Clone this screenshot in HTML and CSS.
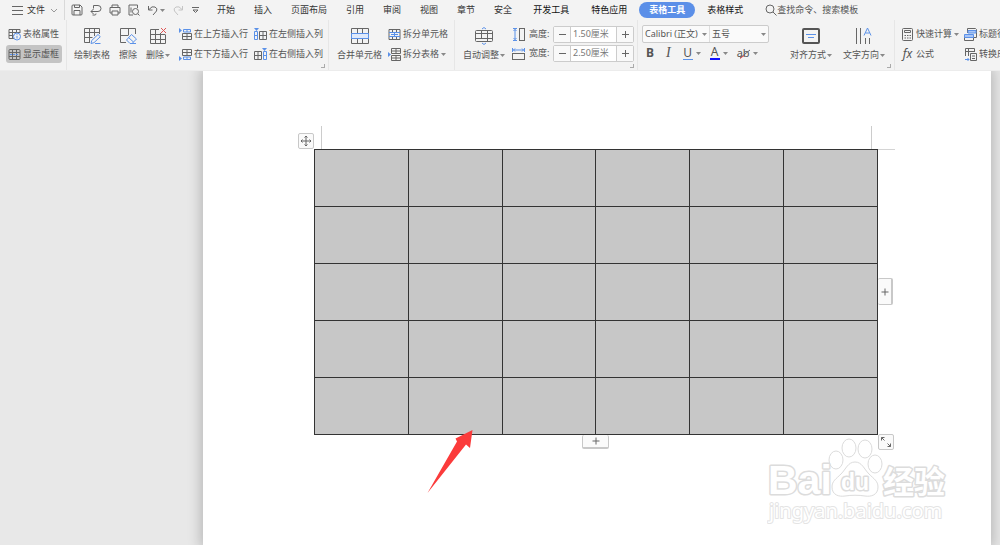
FILE: index.html
```
<!DOCTYPE html>
<html lang="zh-CN">
<head>
<meta charset="utf-8">
<title>文字处理 - 表格工具</title>
<link rel="stylesheet" href="styles.css">
</head>
<body>
<svg class="defs" aria-hidden="true">
  <symbol id="caret" viewBox="0 0 5 3"><path class="solid" d="M0 0h5L2.500 3z"/></symbol>
</svg>
<header class="toolbar">
  <div class="menubar">
    <button class="file"><svg class="burger" viewBox="0 0 11 9"><path d="M0 .5h11M0 4.500h11M0 8.500h11"/></svg>文件<svg class="chevron" viewBox="0 0 8 5"><path d="M1 1l3 3 3-3"/></svg></button>
    <div class="quick">
      <button aria-label="保存"><svg viewBox="0 0 12 12"><path d="M1 2q0-1 1-1h7l2 2v7q0 1-1 1H2q-1 0-1-1zM3.500 1v2.500h5V1M3 11V6.500h6V11"/></svg></button>
      <button aria-label="输出"><svg viewBox="0 0 12 12"><path d="M3.500 4.500V1.500H8a3 3 0 010 6H1M3.500 5L1 7.500 3.500 10M2.500 11H5q1 0 1-1.500"/></svg></button>
      <button aria-label="打印"><svg viewBox="0 0 12 12"><path d="M3 3.500V1h6v2.500M3 9H1V3.500h10V9H9M3 7h6v4H3z"/></svg></button>
      <button aria-label="打印预览"><svg viewBox="0 0 12 12"><path d="M5 11H1V1h8.500v3M10 10l1.500 1.500M3 3.500v5"/><circle cx="7.500" cy="7.500" r="3"/></svg></button>
      <button class="undo" aria-label="撤销"><svg viewBox="0 0 12 12"><path d="M1.500 2v4h4M2 5.500q3-4 6-2.500t1.500 4L6 11"/></svg><svg class="caret"><use href="#caret"/></svg></button>
      <button class="faded" aria-label="恢复"><svg viewBox="0 0 12 12"><path d="M10.500 2v4h-4M10 5.500Q7 1.500 4 3T2.500 7L6 11"/></svg></button>
      <button class="more" aria-label="自定义"><svg viewBox="0 0 7 6"><path d="M0 .5h7M1 3h5L3.500 5.500z"/></svg></button>
    </div>
    <nav class="tabs">
      <button>开始</button><button>插入</button><button>页面布局</button><button>引用</button><button>审阅</button><button>视图</button><button>章节</button><button>安全</button>
    </nav>
    <nav class="tabs wide">
      <button>开发工具</button><button>特色应用</button><button class="active">表格工具</button><button>表格样式</button>
    </nav>
    <button class="search"><svg viewBox="0 0 12 12"><circle cx="5" cy="5" r="4"/><path d="M8 8l3.500 3.500"/></svg>查找命令、搜索模板</button>
  </div>

  <div class="ribbon">
    <section class="group props">
      <div class="stack">
        <button class="cmd"><svg viewBox="0 0 13 13"><path d="M6 10.500H1v-9h11V5M1 4.500h11M1 7.500h5M4.500 1.500v9M8.500 1.500v3"/><g class="blue"><circle class="paper" cx="9" cy="8.500" r="3.500"/><path d="M9 8v2.500M9 6.200v1"/></g></svg>表格属性</button>
        <button class="cmd pressed"><svg viewBox="0 0 13 13"><rect x="1" y="1.500" width="11" height="10" rx="1"/><path d="M1 4.500h11M4.500 1.500v10M8.500 1.500v10M1 8.500h11"/><path class="blue" d="M2 6.500h9" stroke-dasharray="2 1"/></svg>显示虚框</button>
      </div>
    </section>

    <section class="group edit">
      <button class="big"><svg viewBox="0 0 18 18"><path d="M7 15.500H1.500v-14h15V7M1.500 5.500h15M1.500 10.500h8M6.500 1.500v14M11.500 1.500V9"/><path class="blue paper" d="M8 16.500l.7-3L15 7.500l2.300 2.200-6.300 6zM12 16.500h5.500"/></svg><span>绘制表格</span></button>
      <button class="big"><svg viewBox="0 0 18 18"><path d="M7 15.500H1.500v-14h15V7M1.500 8.500h8M9.500 1.500V8"/><path class="blue paper" d="M12.500 7.500l5 4.500-4.500 4.500h-2L7.500 13zM9.500 10.500l5 4.500M11 16.500h6"/></svg><span>擦除</span></button>
      <button class="big"><svg viewBox="0 0 18 18"><path d="M10 2.500H1.500v14h15V8M1.500 7.500h15M1.500 12.500h15M6.500 2.500v14M11.500 6v10.500"/><path class="red" d="M12 1l5 5M17 1l-5 5"/></svg><span>删除<svg class="caret"><use href="#caret"/></svg></span></button>
      <div class="stack">
        <button class="cmd"><svg viewBox="0 0 13 13"><path d="M3.500 5.500h9v6h-9zM3.500 8.500h9M8 5.500v6"/><path class="blue" d="M4.500 4V1.500h7V4zM8 1.500V4"/><path class="bluefill" d="M0 0l3 2.500L0 5z"/></svg>在上方插入行</button>
        <button class="cmd"><svg viewBox="0 0 13 13"><path d="M3.500 1.500h9v6h-9zM3.500 4.500h9M8 1.500v6"/><path class="blue" d="M4.500 9v2.500h7V9zM8 9v2.500"/><path class="bluefill" d="M0 8l3 2.500L0 13z"/></svg>在下方插入行</button>
      </div>
      <div class="stack">
        <button class="cmd"><svg viewBox="0 0 13 13"><path d="M5.500 3.500h7v8h-7zM5.500 7.500h7M9 3.500v8"/><path class="blue" d="M.5 3.500h3v8h-3zM.5 7.500h3"/><path class="bluefill" d="M0 0h5L2.500 3z"/></svg>在左侧插入列</button>
        <button class="cmd"><svg viewBox="0 0 13 13"><path d="M.5 3.500h7v8h-7zM.5 7.500h7M4 3.500v8"/><path class="blue" d="M9.500 3.500h3v8h-3zM9.500 7.500h3"/><path class="bluefill" d="M8 0h5l-2.500 3z"/></svg>在右侧插入列</button>
      </div>
      <i class="corner"></i>
    </section>

    <section class="group merge">
      <button class="big"><svg viewBox="0 0 18 18"><path d="M.5 1.500h17v15H.5zM6.500 1.500V6M11.500 1.500V6M6.500 12v4.500M11.500 12v4.500"/><path class="blue tint" d="M.5 6.500h17v5H.5z"/></svg><span>合并单元格</span></button>
      <div class="stack">
        <button class="cmd"><svg viewBox="0 0 13 13"><path d="M1 1.500h11v10H1zM4.500 1.500V4M8.500 1.500V4M4.500 9v2.500M8.500 9v2.500"/><path class="blue" d="M1 4.500h11M1 8.500h11M3 6.500h7M6.500 4.500v4"/></svg>拆分单元格</button>
        <button class="cmd"><svg viewBox="0 0 13 13"><path d="M3.500 5.500v-5h9v5zM3.500 3h9M8 .5v5M3.500 7.500h9v5h-9zM3.500 10h9M8 7.500v5"/><path class="bluefill" d="M0 4l3 2.500L0 9z"/></svg>拆分表格<svg class="caret"><use href="#caret"/></svg></button>
      </div>
    </section>

    <section class="group size">
      <button class="big"><svg viewBox="0 0 18 18"><rect x=".5" y="3.500" width="17" height="11" rx="1"/><path d="M.5 6.500h17M.5 11.500h17M6.500 3.500v8M12.500 3.500v11"/><path class="blue" d="M7 2L9 .5 11 2M7 16l2 1.500 2-1.500"/></svg><span>自动调整<svg class="caret"><use href="#caret"/></svg></span></button>
      <div class="stack measures">
        <div class="measure"><svg viewBox="0 0 13 13"><rect x="7.500" y=".5" width="5" height="12"/><path class="blue" d="M1 .5h4M1 12.500h4M3 1v11M1.500 3L3 1.500 4.500 3M1.500 10L3 11.500 4.500 10"/></svg><label for="h">高度:</label><div class="stepper"><button aria-label="减小高度"><svg viewBox="0 0 7 7"><path d="M0 3.500h7"/></svg></button><input id="h" value="1.50厘米"><button aria-label="增大高度"><svg viewBox="0 0 7 7"><path d="M0 3.500h7M3.500 0v7"/></svg></button></div></div>
        <div class="measure"><svg viewBox="0 0 13 13"><rect x=".5" y="6.500" width="12" height="6"/><path class="blue" d="M.5 1v4M12.500 1v4M1 3h11M3 1.500L1.500 3 3 4.500M10 1.500L11.500 3 10 4.500"/></svg><label for="w">宽度:</label><div class="stepper"><button aria-label="减小宽度"><svg viewBox="0 0 7 7"><path d="M0 3.500h7"/></svg></button><input id="w" value="2.50厘米"><button aria-label="增大宽度"><svg viewBox="0 0 7 7"><path d="M0 3.500h7M3.500 0v7"/></svg></button></div></div>
      </div>
      <i class="corner"></i>
    </section>

    <section class="group text">
      <div class="fonts">
        <div class="combos">
          <div class="combo family"><select aria-label="字体"><option>Calibri (正文)</option></select><svg class="caret"><use href="#caret"/></svg></div>
          <div class="combo points"><select aria-label="字号"><option>五号</option></select><svg class="caret"><use href="#caret"/></svg></div>
        </div>
        <div class="formats">
          <button class="bold">B</button>
          <button class="italic">I</button>
          <button><span class="under">U</span><svg class="caret"><use href="#caret"/></svg></button>
          <button><span class="ink">A</span><svg class="caret"><use href="#caret"/></svg></button>
          <button><span class="mark">ab<svg viewBox="0 0 13 12"><path d="M3 11L13 3"/><path class="red" d="M3 11.500l4-3"/></svg></span><svg class="caret"><use href="#caret"/></svg></button>
        </div>
      </div>
      <button class="big"><svg viewBox="0 0 18 18"><rect class="heavy" x="1" y="2" width="16" height="14" rx="1"/><path class="blue" d="M4 7.500h10M6 10.500h6"/></svg><span>对齐方式<svg class="caret"><use href="#caret"/></svg></span></button>
      <button class="big"><svg viewBox="0 0 18 18"><path d="M1.500 1v16M5.500 1v16M10.500 11v6M14.500 11v6"/><path class="blue" d="M9 8.500L12.500 1 16 8.500M10.500 6h4"/></svg><span>文字方向<svg class="caret"><use href="#caret"/></svg></span></button>
      <i class="corner"></i>
    </section>

    <section class="group data">
      <div class="stack">
        <button class="cmd"><svg viewBox="0 0 13 13"><rect x="1.500" y=".5" width="10" height="12" rx="1"/><path d="M3.500 2.500h6v2h-6zM3.500 7.500h1.500M6 7.500h1.500M8.500 7.500H10M3.500 10h1.500M6 10h1.500M8.500 10H10"/></svg>快速计算<svg class="caret"><use href="#caret"/></svg></button>
        <button class="cmd"><em>fx</em>公式</button>
      </div>
      <div class="stack">
        <button class="cmd"><svg viewBox="0 0 13 13"><path d="M3.500 5V.5h8l1 1v8H10M.5 8v4.500h9V8"/><path class="blue fill" d="M4 2.500h8V5H4zM.5 6.500h9v3h-9z"/></svg>标题行重复</button>
        <button class="cmd"><svg viewBox="0 0 13 13"><path d="M1.500 8V.5h9V4M1.500 3.500h9M4.500.5V8M6.500 12.500v-7h6v7zM8 8h3M8 10.500h3"/><path class="blue" d="M1 11.500h4M3.500 10L5 11.500 3.500 13"/></svg>转换成文本</button>
      </div>
    </section>
  </div>
</header>

<main class="workspace">
  <article class="page">
    <div class="sheet">
      <i class="mark-left"></i><i class="mark-right"></i><i class="mark-edge"></i>
      <table class="grid" aria-label="空白表格">
        <tbody>
          <tr><td></td><td></td><td></td><td></td><td></td><td></td></tr>
          <tr><td></td><td></td><td></td><td></td><td></td><td></td></tr>
          <tr><td></td><td></td><td></td><td></td><td></td><td></td></tr>
          <tr><td></td><td></td><td></td><td></td><td></td><td></td></tr>
          <tr><td></td><td></td><td></td><td></td><td></td><td></td></tr>
        </tbody>
      </table>
      <button class="handle move" aria-label="移动表格"><svg viewBox="0 0 12 12"><path d="M6 1v10M1 6h10M4.500 2.500L6 1l1.500 1.500M4.500 9.500L6 11l1.500-1.500M2.500 4.500L1 6l1.500 1.500M9.500 4.500L11 6 9.500 7.500"/></svg></button>
      <button class="handle add-col" aria-label="添加列"><svg viewBox="0 0 8 8"><path d="M4 .5v7M.5 4h7"/></svg></button>
      <button class="handle add-row" aria-label="添加行"><svg viewBox="0 0 8 8"><path d="M4 .5v7M.5 4h7"/></svg></button>
      <button class="handle resize" aria-label="调整大小"><svg viewBox="0 0 12 12"><path d="M1.500 4.500v-3h3M1.500 1.500l3 3M10.500 7.500v3h-3M10.500 10.500l-3-3"/></svg></button>
      <svg class="arrow" viewBox="0 0 46 64"><path d="M45.500 0L43 18l-4-3.500L.5 63 30 11.500l-1.500-3z"/></svg>
      <svg class="watermark" viewBox="0 0 184 90">
        <path d="M88 27c-7 0-9 7-14 12s-9 7-9 13c0 8 7 10 13 9s14-1 20 0 13-1 13-9c0-6-4-8-9-13s-7-12-14-12z"/>
        <ellipse cx="69" cy="25" rx="7" ry="9"/><ellipse cx="82" cy="13" rx="7" ry="9"/><ellipse cx="98" cy="14" rx="7" ry="9"/><ellipse cx="108" cy="29" rx="7" ry="9"/>
        <text class="brand" x="1" y="59">Bai</text>
        <text class="du" x="74" y="55">du</text>
        <text class="cn" x="116" y="58">经验</text>
        <text class="url" x="2" y="83">jingyan.baidu.com</text>
      </svg>
    </div>
  </article>
</main>
</body>
</html>
```
FILE: styles.css
```
* { box-sizing: border-box; }
body {
  margin: 0;
  min-height: 100vh;
  display: flex;
  flex-direction: column;
  overflow: hidden;
  background: #e8e8e8;
  color: #555;
  font: 9px/12px "Noto Sans", "Noto Sans CJK SC", sans-serif;
}
button, input, select { font: inherit; color: inherit; margin: 0; padding: 0; border: 0; background: none; }
button { display: flex; align-items: center; flex: none; white-space: nowrap; }
svg { flex: none; fill: none; stroke: #666; stroke-width: 1; }
.defs { position: absolute; width: 0; height: 0; }
.caret { width: 5px; height: 3px; margin-left: 1px; stroke: none; fill: #888; }
.solid { stroke: none; }
.blue { stroke: #5b91e8; }
.bluefill { stroke: none; fill: #5b91e8; }
.red { stroke: #e05555; }
.paper { fill: #f3f3f3; }
.tint { fill: #dfeafc; }
.fill { fill: #a9c5f5; }
.heavy { stroke: #555; stroke-width: 2; }

.toolbar { position: relative; z-index: 1; background: #f3f3f3; border-bottom: 1px solid #ececec; overflow: hidden; }
.menubar { display: flex; align-items: center; height: 20px; color: #333; }
.file { height: 20px; padding-left: 12px; width: 65px; border-right: 1px solid #d9d9d9; }
.burger { width: 11px; height: 9px; margin-right: 4px; }
.chevron { width: 8px; height: 5px; margin-left: 5px; stroke: #999; }
.quick { display: flex; align-items: center; gap: 7px; padding-left: 6px; width: 152px; }
.quick svg { width: 12px; height: 12px; }
.quick .caret { width: 5px; height: 3px; }
.quick .faded svg { stroke: #c4c4c4; }
.quick .more svg { width: 7px; height: 6px; }
.quick .more { margin-left: 1px; }
.tabs { display: flex; gap: 19px; }
.tabs.wide { margin-left: 11px; gap: 2px; color: #111; }
.tabs.wide button { padding: 0 10px; height: 16px; }
.tabs.wide .active { background: #5b8fe8; color: #fff; font-weight: bold; border-radius: 8px; }
.search { margin-left: 12px; color: #555; }
.search svg { width: 12px; height: 12px; }

.ribbon { display: flex; height: 50px; }
.group { position: relative; display: flex; flex: none; align-items: flex-start; border-right: 1px solid #e6e6e6; padding-top: 5px; }
.stack { display: flex; flex-direction: column; gap: 2px; flex: none; }
.cmd { height: 18px; gap: 2px; }
.cmd > svg:first-child { width: 13px; height: 13px; }
.cmd .caret { margin-left: 0; }
.cmd em { width: 13px; font: italic 12px/14px "Noto Sans", sans-serif; }
.big { flex-direction: column; gap: 3px; padding-top: 2px; }
.big > svg { width: 18px; height: 18px; }
.big span { display: flex; align-items: center; height: 14px; }
.corner { position: absolute; right: 3px; bottom: 2px; width: 4px; height: 4px; border: solid #aaa; border-width: 0 1px 1px 0; }

.props { width: 67px; padding-left: 6px; }
.props .cmd { padding: 0 3px 0 2px; border-radius: 3px; }
.props .pressed { background: #c4c4c4; }
.edit { width: 262px; padding-left: 7px; gap: 9px; }
.edit .stack + .stack { margin-left: -3px; }
.merge { width: 126px; padding-left: 8px; gap: 6px; }
.size { width: 183px; padding-left: 8px; gap: 7px; }
.measures { gap: 1px; }
.measure { display: flex; align-items: center; height: 18px; }
.measure > svg { width: 13px; height: 13px; }
.measure label { width: 24px; margin-left: 4px; }
.stepper { display: flex; width: 81px; height: 17px; background: #fff; border: 1px solid #ccc; border-radius: 2px; }
.stepper button { width: 16px; justify-content: center; background: #f9f9f9; }
.stepper svg { width: 7px; height: 7px; }
.stepper input { flex: 1; min-width: 0; padding-left: 2px; border: solid #ccc; border-width: 0 1px; color: #777; }

.text { width: 257px; padding-left: 4px; }
.fonts { width: 127px; margin-right: 21px; }
.combos { display: flex; height: 18px; border: 1px solid #ccc; border-radius: 2px; background: #fafafa; }
.combo { position: relative; display: flex; align-items: center; }
.combo select { width: 100%; padding-left: 2px; appearance: none; outline: 0; }
.combo .caret { position: absolute; right: 2px; }
.family { width: 67px; border-right: 1px solid #ddd; }
.points { flex: 1; }
.formats { display: flex; align-items: center; height: 20px; padding-left: 4px; gap: 9px; font-size: 12px; line-height: 12px; }
.formats .caret { margin-left: 3px; }
.bold { font-weight: bold; }
.italic { font-family: "Liberation Serif", serif; font-style: italic; font-size: 14px; padding: 0 3px; }
.under { width: 10px; border-bottom: 1px solid #5b91e8; }
.ink { width: 10px; border-bottom: 2px solid #11f; }
.mark { position: relative; font-size: 11px; }
.mark svg { position: absolute; inset: 0; width: 13px; height: 12px; }
.text .big + .big { margin-left: 11px; }
.data { padding-left: 6px; gap: 5px; border: 0; }

.workspace { flex: 1; display: flex; padding: 0 9px 0 203px; }
.page { flex: 1; padding: 78px 113px 0 111px; background: #fff; box-shadow: 0 0 12px 3px rgba(0, 0, 0, 0.2); }
.sheet { position: relative; }
.grid { width: 100%; table-layout: fixed; border-collapse: collapse; background: #c7c7c7; }
.grid td { height: 57px; padding: 0; border: 1px solid #333; }
.mark-left, .mark-right { position: absolute; bottom: 100%; height: 23px; border-left: 1px solid #ccc; }
.mark-left { left: 7px; }
.mark-right { right: 6px; }
.mark-edge { position: absolute; left: 100%; width: 17px; border-top: 1px solid #d4d4d4; }
.handle { position: absolute; justify-content: center; background: #fafafa; border: 1px solid #c8c8c8; border-radius: 2px; }
.handle svg { width: 8px; height: 8px; }
.move, .resize { width: 16px; height: 16px; }
.move svg, .resize svg { width: 12px; height: 12px; }
.move { right: 100%; bottom: 100%; }
.resize { left: 100%; top: 100%; margin-top: -1px; }
.add-col { left: 100%; top: 50%; width: 15px; height: 27px; margin-top: -14px; border-width: 1px 2px 1px 0; }
.add-row { left: 50%; top: 100%; width: 27px; height: 14px; margin-left: -14px; border-width: 0 1px 2px; }
.arrow { position: absolute; left: 20%; bottom: -59px; width: 46px; height: 64px; stroke: none; fill: #fb3b3b; }
.watermark { position: absolute; right: -73px; top: 100%; width: 184px; height: 90px; fill: #fff; stroke: #dcdcdc; stroke-width: 1; }
.watermark text { paint-order: stroke; stroke-width: 3px; stroke-linejoin: round; }
.brand { font: bold 41px "Liberation Sans", sans-serif; }
.du { font: bold 23px "Liberation Sans", sans-serif; }
.cn { font: bold 31px "Noto Sans CJK SC", sans-serif; }
.watermark .url { font: 20px "Noto Sans", sans-serif; stroke: #e4e4e4; stroke-width: 2px; }
```
